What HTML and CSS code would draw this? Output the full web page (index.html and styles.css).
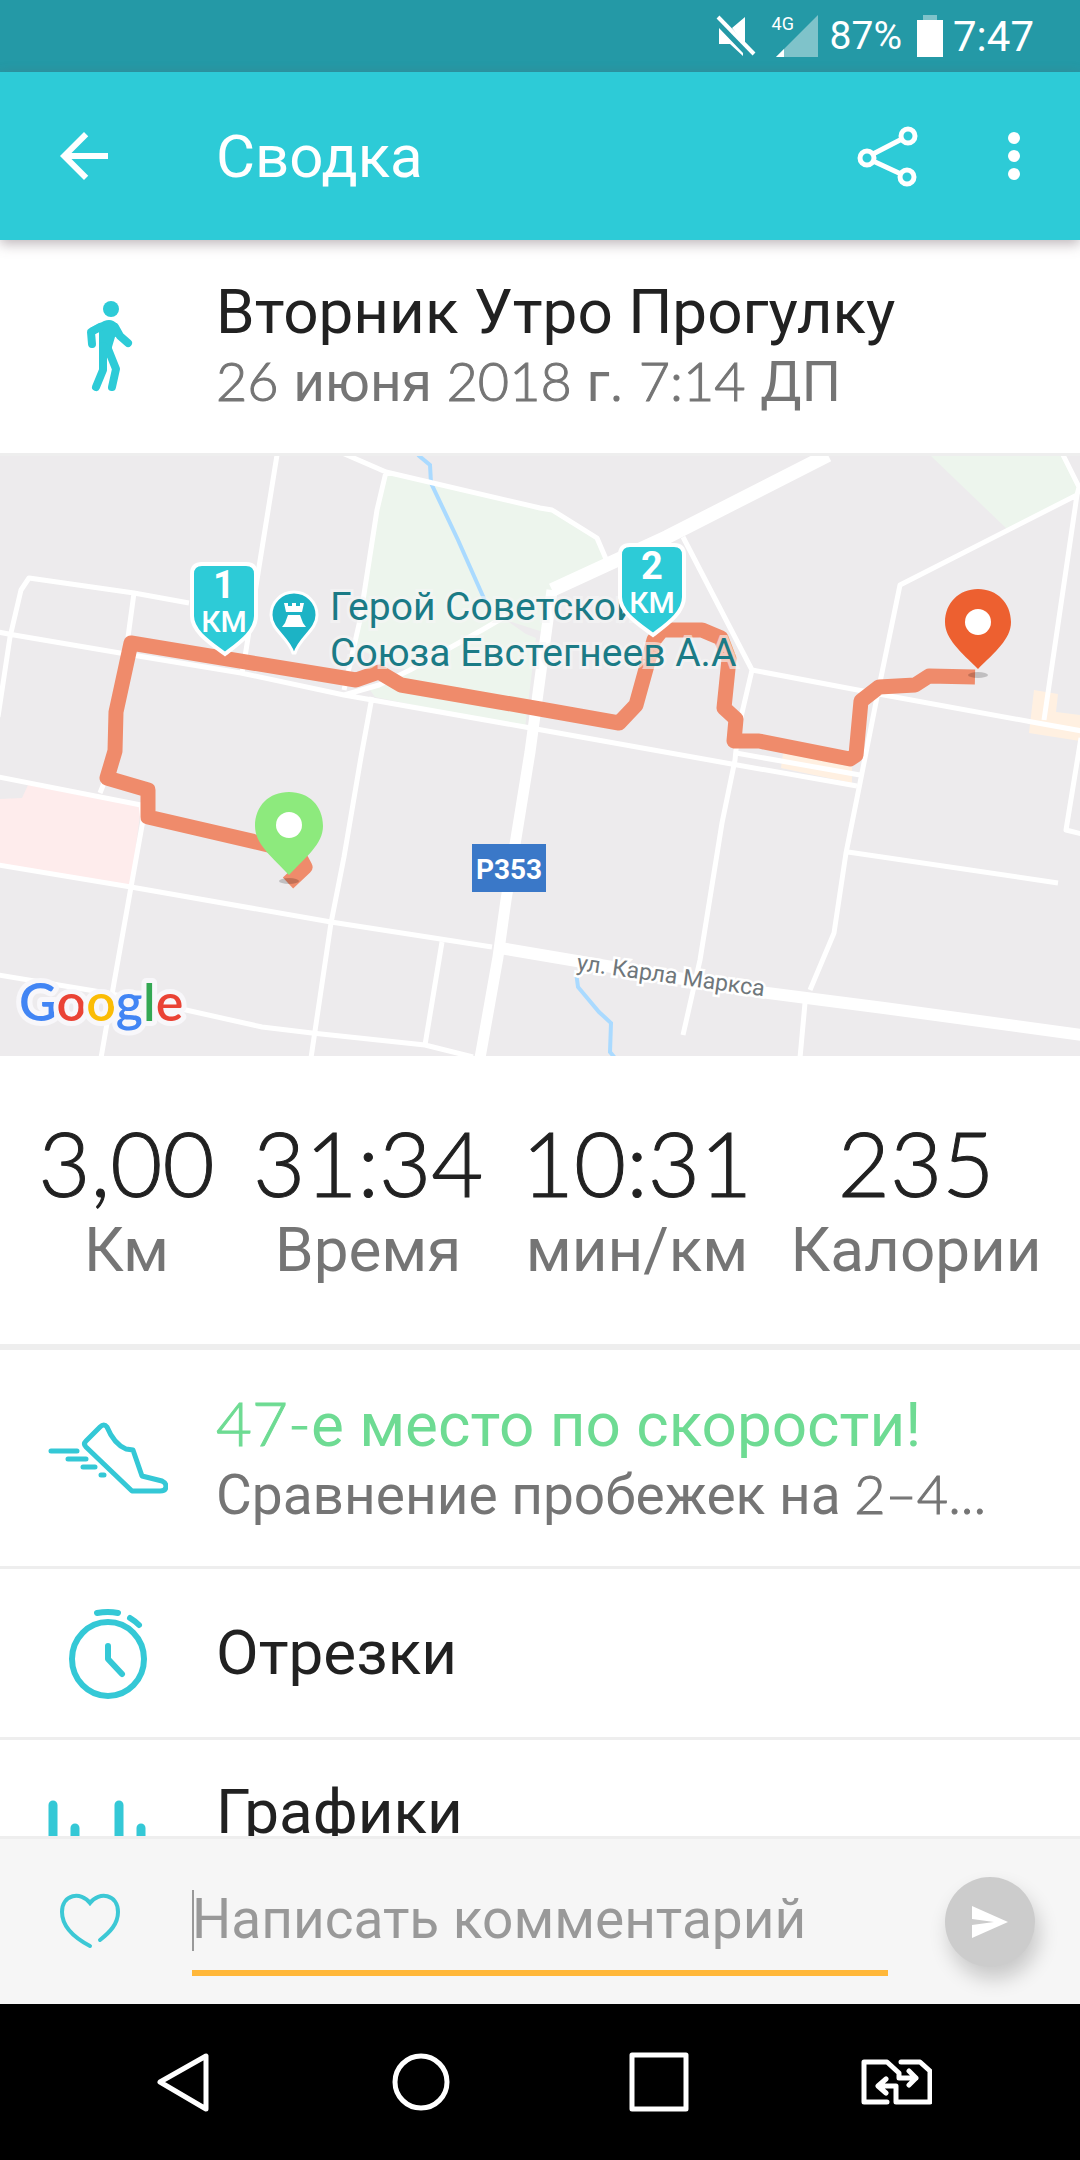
FILE: index.html
```html
<!DOCTYPE html>
<html lang="ru">
<head>
<meta charset="utf-8">
<meta name="viewport" content="width=device-width, initial-scale=1">
<title>Сводка</title>
<link rel="stylesheet" href="styles.css">
</head>
<body>
<div class="status">
  <svg class="status-mute" viewBox="0 0 40 42" aria-hidden="true"><path fill="#fff" d="M3 13l24 25v3l-13-12H3zM29 2v28L16 13z"/><path stroke="#fff" stroke-width="4" d="M2 2l36 37"/></svg>
  <div class="signal"><span class="signal-type">4G</span>
    <svg viewBox="0 0 46 42" aria-hidden="true"><path fill="#7fc3ca" d="M46 0v42H4z"/><path fill="#fff" d="M12 34v8H4z"/></svg>
  </div>
  <span class="status-percent">87%</span>
  <svg class="status-battery" viewBox="0 0 26 42" aria-hidden="true"><path fill="#7fc3ca" d="M6 0h14v5H6z"/><path fill="#fff" d="M0 5h26v37H0z"/></svg>
  <time class="status-time">7:47</time>
</div>

<header class="appbar">
  <button class="icon-button" aria-label="Назад"><svg class="icon-72" viewBox="0 0 24 24"><path fill="#fff" d="M20 11H7.83l5.59-5.59L12 4l-8 8 8 8 1.41-1.41L7.83 13H20z"/></svg></button>
  <h1 class="appbar-title">Сводка</h1>
  <button class="icon-button" aria-label="Поделиться"><svg class="icon-72" viewBox="852 120 72 72"><g fill="none" stroke="#fff" stroke-width="5"><circle cx="867" cy="158" r="7"/><circle cx="908" cy="136" r="7"/><circle cx="907" cy="177" r="7"/><path d="M873 154l29-15M873 161l28 13"/></g></svg></button>
  <button class="icon-button" aria-label="Ещё"><svg class="icon-72" viewBox="0 0 72 72"><g fill="#fff"><circle cx="36" cy="18" r="6"/><circle cx="36" cy="36" r="6"/><circle cx="36" cy="54" r="6"/></g></svg></button>
</header>

<main class="content">
  <section class="row row-lead">
    <svg class="row-icon" viewBox="48 286 120 120" aria-hidden="true">
      <circle cx="111" cy="308" r="8" fill="#2dcbd7"/>
      <path fill="#2dcbd7" d="M90 327l14-7q8-3 13 3l5 11-7 2-3 10v5l-5 6-8-4V331l-7 2z"/>
      <g fill="none" stroke="#2dcbd7" stroke-width="8" stroke-linecap="round" stroke-linejoin="round"><path d="M100 326l-9 5 1 12M115 326l5 9 8 7M103 345v24l-7 17M108 348l8 20-4 18"/></g>
    </svg>
    <div class="row-text">
      <h2 class="row-title">Вторник Утро Прогулку</h2>
      <p class="row-sub"><span class="num">26 </span>июня<span class="num"> 2018 </span>г.<span class="num"> 7:14 </span>ДП</p>
    </div>
  </section>

  <section class="map" aria-label="Карта маршрута">
    <svg viewBox="0 0 1080 600" preserveAspectRatio="xMidYMid slice">
      <rect width="1080" height="600" fill="#edebed"/>
      <path fill="#edf5ed" d="M386 16l154 36 12 2 45 28 8 20-53 32-9 42-37-12 20 14 10 4-8 66-3 24-150-31-5-7 36-20-50-22 4-32zM931 0h132l15 27-2 14-68 33z"/>
      <path fill="#feecec" d="M28 329l113 22-10 78-131-21v-65l22-1z"/>
      <path fill="#fff0e1" d="M1034 234l24 4-2 18 24 3v26l-51-8zM783 297l69 14v16l-71-15z"/>
      <g fill="none" stroke="#aadaff" stroke-width="4"><path d="M418-1l12 10 1 18 27 57 28 63M576 516l2 15 21 25 12 11-1 29 5 6"/></g>
      <g fill="none" stroke="#fff" stroke-width="5" stroke-linejoin="round">
        <path d="M277-1l-18 112-14 90-3 16M340-4l46 20 154 36 12 2 45 28 9 21M386 16l-9 38-17 110-16 70M189 147l-55-10-105-15-8 12-11 47-12 80M-2 176l16 3 106 18 121 20 103 22 181 32 201 36 131 23M134 137l-6 44M372 241l-11 60-17 100-13 66-20 135M344 239l35-10 31-15 72-40 24-14"/>
        <path d="M683 81l69 133-14 60-3 30-13 63-22 137-17 75M752 214l132 25 148 27 50 9M1077 39L900 129l-21 102-19 96-14 70-12 80-24 57M805 547l-5 55M1063-1l16 32-2 8-33 225M1081 282l-15 92 16 4M736 297l124 22M848 396l210 31"/>
        <path d="M-1 409l132 22 200 35 161 25M-1 321l142 28M100 337l6-15M141 349l2 15-12 67-17 96-13 75M-1 519l108 18 79 17 76 17 50 6 113 12 48 12M442 486l-17 103"/>
        <path stroke-width="14" d="M828-1L667 81l-115 53"/>
        <path stroke-width="11" d="M552 134l-22 162-24 148-8 57-18 101"/>
        <path stroke-width="12" d="M500 492l260 44 124 16 198 27"/>
      </g>
      <path fill="none" stroke="#ef8b6b" stroke-width="15" stroke-linejoin="round" d="M288 427l17-16-8-15-37-9-112-26v-27l-41-12 8-27 1-39 15-69 225 37 23-8 22 13 139 24 79 14 17-18 18-65 8-10h40l19 8 8 21-5 49 12 11-2 22h25l91 18 6-4 5-54 18-14 36-2 14-9 46 1"/>
      <path fill="#1cb3c5" stroke="#fff" stroke-width="3" d="M294 136a23 23 0 0 1 23 23c0 15-17 22-22 38h-2c-5-16-22-23-22-38a23 23 0 0 1 23-23z"/>
      <path fill="#fff" d="M284 147h4v3h4v-3h4v3h4v-3h4l-2 9h-16zM288 159h12l3 8 3 4h-24l3-4z"/>
      <g class="map-poi"><text x="330" y="164">Герой Советской</text><text x="330" y="210">Союза Евстегнеев А.А</text></g>
      <rect x="472" y="388" width="74" height="48" fill="#3a78c8"/>
      <text class="map-road" x="509" y="423">P353</text>
      <text class="map-street" transform="translate(576 514) rotate(8)">ул. Карла Маркса</text>
      <g class="map-km">
        <path d="M202 108h44q10 0 10 10v42c0 16-18 28-31 38-13-10-33-22-33-38v-42q0-10 10-10z"/><text class="map-km-number" x="224" y="142">1</text><text x="224" y="176">КМ</text>
        <path d="M630 89h44q10 0 10 10v42c0 16-18 28-31 38-13-10-33-22-33-38V99q0-10 10-10z"/><text class="map-km-number" x="652" y="123">2</text><text x="652" y="157">КМ</text>
      </g>
      <g fill="#00000030"><ellipse cx="978" cy="219" rx="10" ry="3"/><ellipse cx="289" cy="425" rx="10" ry="3"/></g>
      <path fill="#ed6030" d="M978 133c19 0 33 14 33 33 0 17-16 30-33 47-17-17-33-30-33-47 0-19 14-33 33-33z"/><circle cx="978" cy="166" r="13" fill="#fff"/>
      <path fill="#8dea7d" d="M289 336c20 0 34 14 34 34 0 18-17 31-34 49-17-18-34-31-34-49 0-20 14-34 34-34z"/><circle cx="289" cy="369" r="13" fill="#fff"/>
      <text class="map-google" x="19" y="565"><tspan fill="#4285f4">G</tspan><tspan fill="#ea4335">o</tspan><tspan fill="#fbbc05">o</tspan><tspan fill="#4285f4">g</tspan><tspan fill="#34a853">l</tspan><tspan fill="#ea4335">e</tspan></text>
    </svg>
  </section>

  <dl class="stats">
    <div class="stat"><dd class="stat-value">3,00</dd><dt class="stat-label">Км</dt></div>
    <div class="stat"><dd class="stat-value">31:34</dd><dt class="stat-label">Время</dt></div>
    <div class="stat"><dd class="stat-value">10:31</dd><dt class="stat-label">мин/км</dt></div>
    <div class="stat"><dd class="stat-value">235</dd><dt class="stat-label">Калории</dt></div>
  </dl>

  <section class="row">
    <svg class="row-icon" viewBox="48 1398 120 120" aria-hidden="true"><g fill="none" stroke="#34c8d6" stroke-width="5" stroke-linecap="round" stroke-linejoin="round"><path d="M107 1427q-3-4-7 0l-14 14q-3 3 0 6l46 44h28q6 0 6-5 0-3-4-5l-20-5-9-26-7-1q-12-5-19-22zM51 1451h26M68 1459h18M83 1467h12M101 1475h3"/></g></svg>
    <div class="row-text">
      <h2 class="row-title row-title-good"><span class="num">47-</span>е место по скорости!</h2>
      <p class="row-sub">Сравнение пробежек на <span class="num">2–4...</span></p>
    </div>
  </section>

  <section class="row row-single">
    <svg class="row-icon" viewBox="48 1593 120 120" aria-hidden="true"><g fill="none" stroke="#34c8d6" stroke-width="6" stroke-linecap="round" stroke-linejoin="round"><ellipse cx="108" cy="1659" rx="36" ry="37"/><path d="M108 1646v13l14 15M97 1613q11-2 21 0M130 1618q5 3 9 7"/></g></svg>
    <div class="row-text"><h2 class="row-title">Отрезки</h2></div>
  </section>

  <section class="row">
    <svg class="row-icon" viewBox="0 0 120 120" aria-hidden="true"><g stroke="#34c8d6" stroke-width="9" stroke-linecap="round"><path d="M5 17v98M27 40v75M49 66v49M71 17v98M93 40v75M115 66v49"/></g></svg>
    <div class="row-text"><h2 class="row-title">Графики</h2></div>
  </section>
</main>

<form class="comment">
  <button class="icon-button" type="button" aria-label="Нравится"><svg class="icon-72" viewBox="54 1887 72 72"><path fill="none" stroke="#3cc8d5" stroke-width="4" stroke-linecap="round" d="M90 1947c-19-10-28-22-28-34 0-18 19-21 28-9 9-12 28-9 28 9 0 12-8 20-18 28"/></svg></button>
  <input class="comment-input" type="text" aria-label="Комментарий" placeholder="Написать комментарий">
  <button class="comment-send" type="submit" aria-label="Отправить"><svg viewBox="0 0 36 32"><path fill="#fff" d="M0 0l36 16L0 32V19l22-3L0 13z"/></svg></button>
</form>

<nav class="navbar">
  <button class="nav-button" aria-label="Назад"><svg viewBox="148 2046 72 72"><path d="M206 2056v53l-46-27z"/></svg></button>
  <button class="nav-button" aria-label="Домой"><svg viewBox="0 0 72 72"><circle cx="36" cy="36" r="26"/></svg></button>
  <button class="nav-button" aria-label="Недавние"><svg viewBox="0 0 72 72"><path d="M9 9h54v54H9z"/></svg></button>
  <button class="nav-button" aria-label="Сменить SIM"><svg viewBox="860 2046 72 72"><path d="M887 2102h-23v-40h23l12 11v5h17M909 2071l7 7-7 7M901 2062h19l10 9v31h-34v-16h-17M886 2079l-8 7 8 7"/></svg></button>
</nav>
</body>
</html>
```
FILE: styles.css
```css
* { box-sizing: border-box; }

body {
  display: flex;
  flex-direction: column;
  height: 100vh;
  margin: 0;
  background: #fff;
  color: #212121;
  font-family: Roboto, "Noto Sans", sans-serif;
}

h1, h2, p, dl, dd { margin: 0; font-weight: 400; }

svg { display: block; }

button {
  display: grid;
  place-items: center;
  padding: 0;
  border: 0;
  background: none;
}

.num { font-family: Lato, Roboto, sans-serif; font-weight: 300; -webkit-text-stroke: 1px currentColor; }

.status {
  display: flex;
  flex: none;
  align-items: center;
  justify-content: flex-end;
  height: 72px;
  padding-right: 46px;
  background: #2499a6;
  color: #fff;
}
.status-mute { width: 40px; height: 42px; }
.signal { position: relative; width: 46px; margin-left: 16px; }
.signal-type { position: absolute; top: 0; left: 0; font-size: 18px; line-height: 18px; }
.status-percent { margin-left: 12px; font-size: 39px; }
.status-battery { width: 26px; height: 42px; margin: 0 10px 0 15px; }
.status-time { font-size: 42px; }

.appbar {
  position: relative;
  z-index: 1;
  display: flex;
  flex: none;
  align-items: center;
  height: 168px;
  padding: 0 30px 0 48px;
  background: #2dcbd7;
  box-shadow: 0 4px 12px #6e5a6470;
  color: #fff;
}
.icon-72 { width: 72px; height: 72px; }
.appbar-title { flex: 1; padding-left: 96px; font-size: 60px; }
.appbar .icon-button + .icon-button { margin-left: 54px; }

.content { flex: 1; min-height: 0; overflow: hidden; }

.row {
  display: flex;
  align-items: center;
  height: 219px;
  padding: 0 48px;
  border-bottom: 3px solid #eee;
}
.row-lead { height: 216px; }
.row-single { height: 171px; }
.row-icon { flex: none; width: 120px; height: 120px; }
.row-text { flex: 1; align-self: flex-start; min-width: 0; padding: 36px 0 0 48px; }
.row-single .row-text { align-self: center; padding-top: 0; }
.row-title { font-size: 62px; line-height: 72px; white-space: nowrap; }
.row-title-good { color: #6edb93; }
.row-sub { color: #757575; font-size: 55px; line-height: 66px; white-space: nowrap; }
.row-sub .num { font-size: 54px; }

.map { aspect-ratio: 9 / 5; }
.map svg { width: 100%; height: 100%; }
.map-poi { fill: #1b7b86; font-size: 39px; paint-order: stroke; stroke: #f6f6f6; stroke-width: 6px; stroke-opacity: .6; }
.map-road { fill: #fff; font-size: 28px; font-weight: 700; text-anchor: middle; }
.map-street { fill: #6f777b; font-size: 23px; paint-order: stroke; stroke: #fff; stroke-width: 5px; }
.map-km { fill: #2dcbd7; font-size: 30px; font-weight: 500; text-anchor: middle; }
.map-km path { stroke: #fff; stroke-width: 4px; }
.map-km text { fill: #fff; }
.map-km .map-km-number { font-size: 38px; font-weight: 700; }
.map-google { font-family: Lato, sans-serif; font-size: 52px; font-weight: 600; paint-order: stroke; stroke: #f8f7fa; stroke-width: 10px; stroke-linejoin: round; }

.stats {
  display: flex;
  justify-content: space-evenly;
  height: 294px;
  padding-top: 52px;
  border-bottom: 6px solid #eee;
  text-align: center;
}
.stat-value { font: 300 90px/108px Lato, Roboto, sans-serif; -webkit-text-stroke: 1px currentColor; }
.stat-label { color: #757575; font-size: 62px; line-height: 68px; }

.comment {
  display: flex;
  flex: none;
  align-items: center;
  height: 168px;
  padding: 0 45px 0 54px;
  border-top: 3px solid #eee;
  background: #f6f6f6;
}
.comment-input {
  flex: 1;
  min-width: 0;
  height: 108px;
  margin: 0 57px 0 66px;
  padding: 0;
  border: 0;
  border-bottom: 6px solid #ffb739;
  outline: 0;
  background: linear-gradient(#999, #999) 0 22px / 2px 61px no-repeat;
  font: 55px Roboto, "Noto Sans", sans-serif;
}
.comment-input::placeholder { color: #999; opacity: 1; }
.comment-send {
  width: 90px;
  height: 90px;
  border-radius: 50%;
  background: #ccc;
  box-shadow: 4px 12px 20px #00000030;
}
.comment-send svg { width: 36px; height: 32px; }

.navbar {
  display: grid;
  flex: none;
  grid-template-columns: repeat(4, 1fr);
  height: 156px;
  padding: 0 65px;
  background: #000;
}
.nav-button svg { width: 72px; height: 72px; fill: none; stroke: #fff; stroke-width: 5px; stroke-linecap: round; stroke-linejoin: round; }
```
